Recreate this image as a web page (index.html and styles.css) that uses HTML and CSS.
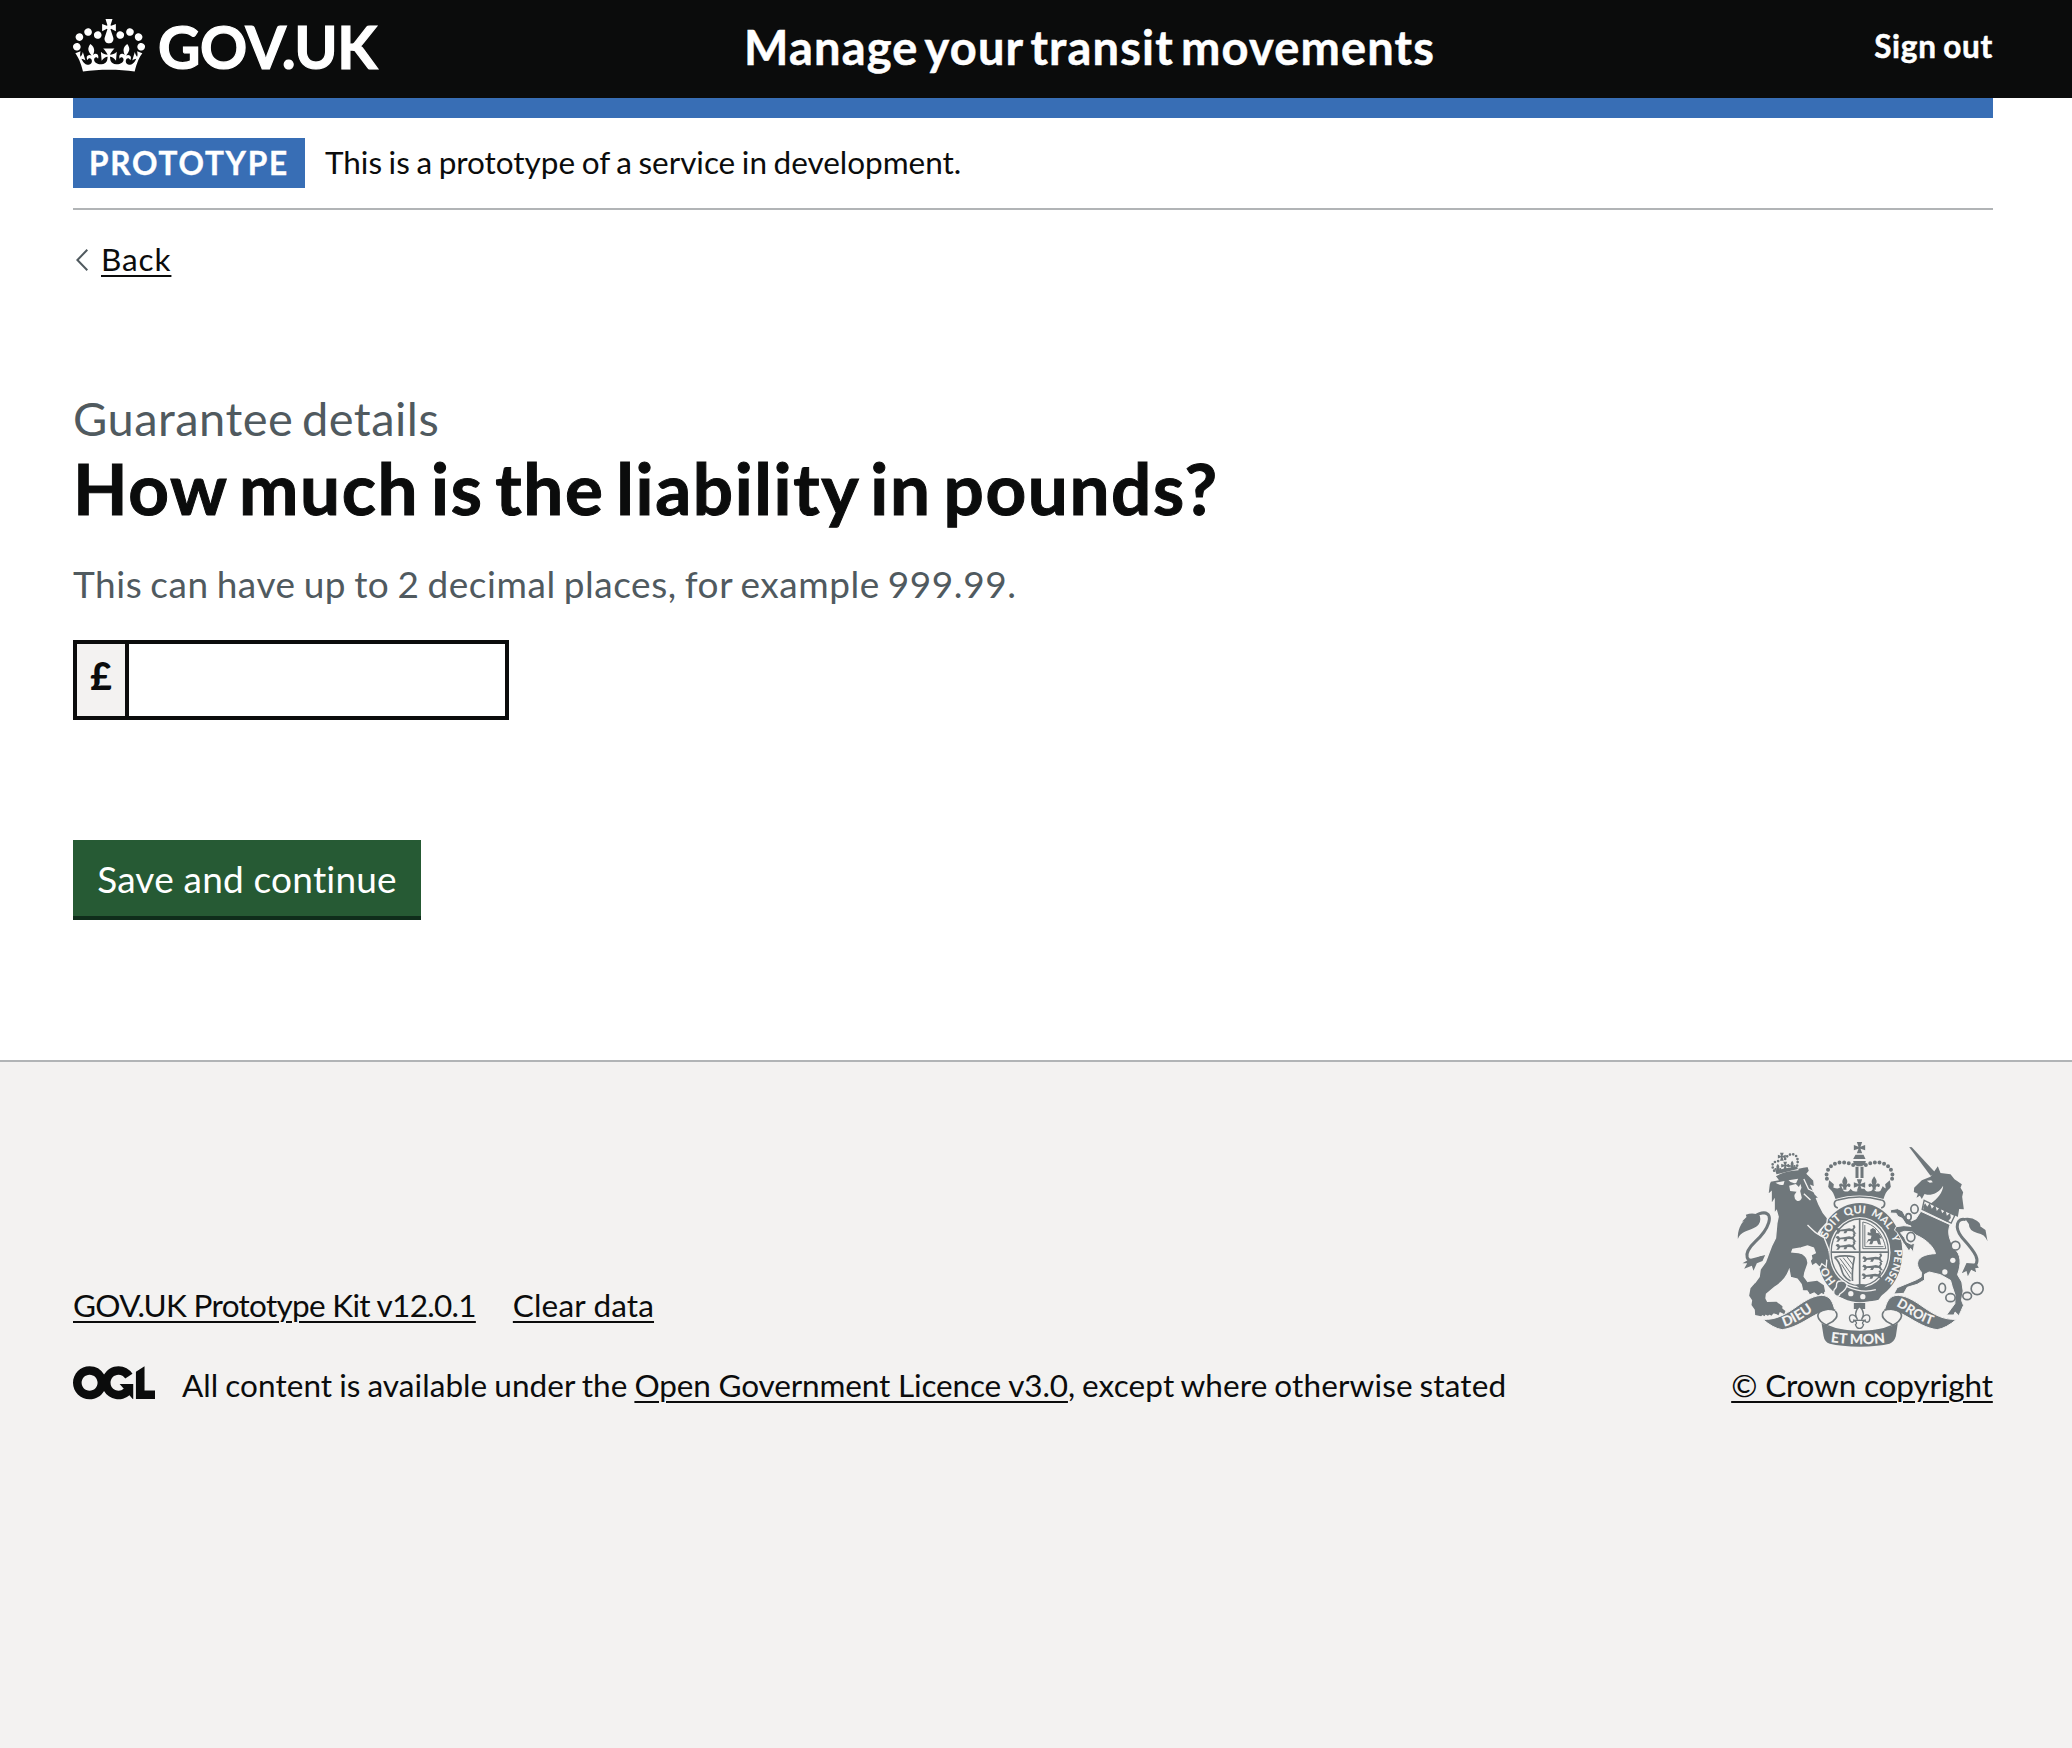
FILE: index.html
```html
<!DOCTYPE html>
<html lang="en">
<head>
<meta charset="utf-8">
<title>How much is the liability in pounds? - Manage your transit movements</title>
<link rel="stylesheet" href="styles.css">
</head>
<body>
<header class="header">
  <div class="container header-inner">
    <a class="logo" href="#">
      <svg class="logo-crown" viewBox="0 0 132 97" aria-hidden="true"><path fill="currentColor" fill-rule="evenodd" d="M25 30.2c3.5 1.5 7.7-.2 9.1-3.7 1.5-3.6-.2-7.8-3.9-9.2-3.6-1.4-7.6.3-9.1 3.9-1.4 3.5.3 7.5 3.9 9zM9 39.5c3.6 1.5 7.8-.2 9.2-3.7 1.5-3.6-.2-7.8-3.9-9.1-3.6-1.5-7.6.2-9.1 3.8-1.4 3.5.3 7.5 3.8 9zM4.4 57.2c3.5 1.5 7.7-.2 9.1-3.8 1.5-3.6-.2-7.7-3.9-9.1-3.5-1.5-7.6.3-9.1 3.8-1.4 3.5.3 7.6 3.9 9.1zm38.3-21.4c3.5 1.5 7.7-.2 9.1-3.8 1.5-3.6-.2-7.7-3.9-9.1-3.6-1.5-7.6.3-9.1 3.8-1.3 3.6.4 7.7 3.9 9.1zm64.4-5.6c-3.6 1.5-7.8-.2-9.1-3.7-1.5-3.6.2-7.8 3.8-9.2 3.6-1.4 7.7.3 9.2 3.9 1.3 3.5-.4 7.5-3.9 9zm15.9 9.3c-3.6 1.5-7.7-.2-9.1-3.7-1.5-3.6.2-7.8 3.7-9.1 3.6-1.5 7.7.2 9.2 3.8 1.5 3.5-.3 7.5-3.8 9zm4.7 17.7c-3.6 1.5-7.8-.2-9.2-3.8-1.5-3.6.2-7.7 3.9-9.1 3.6-1.5 7.7.3 9.2 3.8 1.3 3.5-.4 7.6-3.9 9.1zM89.3 35.8c-3.6 1.5-7.8-.2-9.2-3.8-1.4-3.6.2-7.7 3.9-9.1 3.6-1.5 7.7.3 9.2 3.8 1.4 3.6-.3 7.7-3.9 9.1zM69.7 17.7l8.9 4.7V9.3l-8.9 2.8c-.2-.3-.5-.6-.9-.9L72.4 0H59.6l3.5 11.2c-.3.3-.6.5-.9.9l-8.8-2.8v13.1l8.8-4.7c.3.3.6.7.9.9l-5 15.4v.1c-.2.8-.4 1.6-.4 2.4 0 4.1 3.1 7.5 7 8.1h.2c.3 0 .7.1 1 .1.4 0 .7 0 1-.1h.2c4-.6 7.1-4.1 7.1-8.1 0-.8-.1-1.7-.4-2.4V34l-5.1-15.4c.4-.2.7-.6 1-.9zM66 92.8c16.9 0 32.8 1.1 47.1 3.2 4-16.9 8.9-26.7 14-33.5l-9.6-3.4c1 4.9 1.1 7.2 0 10.2-1.5-1.4-3-4.3-4.2-8.7L108.6 76c2.8-2 5-3.2 7.5-3.3-4.4 9.4-10 11.9-13.6 11.2-4.3-.8-6.3-4.6-5.6-7.9 1-4.7 5.7-5.9 8-.5 4.3-8.7-3-11.4-7.6-8.8 7.1-7.2 7.9-13.5 2.1-21.1-8 6.1-8.1 12.3-4.5 20.8-4.7-5.4-12.1-2.5-9.5 6.2 3.4-5.2 7.9-2 7.2 3.1-.6 4.3-6.4 7.8-13.5 7.2-10.3-.9-10.9-8-11.2-13.8 2.5-.5 7.1 1.8 11 7.3L80.2 60c-4.1 4.4-8 5.3-12.3 5.4 1.4-4.4 8-11.6 8-11.6H55.5s6.4 7.2 7.9 11.6c-4.2-.1-8-1-12.3-5.4l1.4 16.4c3.9-5.5 8.5-7.7 10.9-7.3-.3 5.8-.9 12.8-11.1 13.8-7.2.6-12.9-2.9-13.5-7.2-.7-5 3.8-8.3 7.1-3.1 2.7-8.7-4.6-11.6-9.4-6.2 3.7-8.5 3.6-14.7-4.6-20.8-5.8 7.6-5 13.9 2.2 21.1-4.7-2.6-11.9.1-7.7 8.8 2.3-5.5 7.1-4.2 8.1.5.7 3.3-1.3 7.1-5.7 7.9-3.5.7-9-1.8-13.5-11.2 2.5.1 4.7 1.3 7.5 3.3l-4.7-15.4c-1.2 4.4-2.7 7.2-4.3 8.7-1.1-3-.9-5.3 0-10.2l-9.5 3.4c5 6.9 9.9 16.7 14 33.5 14.8-2.1 30.8-3.2 47.7-3.2z"/></svg>
      <span class="logo-text">GOV.UK</span>
    </a>
    <a class="service-name" href="#">Manage your transit movements</a>
    <a class="sign-out" href="#">Sign out</a>
  </div>
</header>
<div class="container">
  <div class="header-bar"></div>
  <div class="phase-banner">
    <strong class="tag">PROTOTYPE</strong>
    <span class="phase-text">This is a prototype of a service in development.</span>
  </div>
  <a class="back" href="#">
    <svg class="back-arrow" viewBox="0 0 12 22" aria-hidden="true"><path d="M11.3.8 1.4 11l9.9 10.2" fill="none" stroke="#505a5f" stroke-width="2"/></svg>
    <span class="back-text">Back</span>
  </a>
  <main class="main">
    <span class="caption">Guarantee details</span>
    <h1 class="heading"><label for="liability">How much is the liability in pounds?</label></h1>
    <p class="hint">This can have up to 2 decimal places, for example 999.99.</p>
    <div class="input-group">
      <span class="prefix">£</span>
      <input class="input" id="liability" type="text">
    </div>
    <button class="button" type="button">Save and continue</button>
  </main>
</div>
<footer class="footer">
  <div class="container footer-inner">
    <div class="footer-meta">
      <div class="footer-links">
        <a class="kit" href="#">GOV.UK Prototype Kit v12.0.1</a>
        <a class="clear" href="#">Clear data</a>
      </div>
      <div class="licence">
        <svg class="ogl" viewBox="0 0 483.2 195.7" aria-hidden="true">
          <g fill="#0b0c0c"><path d="M421.5 142.8V.1l-50.7 32.3v161.1h112.4v-50.7zm-122.3-9.6A47.12 47.12 0 0 1 221 97.8c0-26 21.1-47.1 47.1-47.1 16.7 0 31.4 8.7 39.7 21.8l42.7-27.2A97.63 97.63 0 0 0 268.1 0c-36.5 0-68.3 20.1-85.1 49.7A98 98 0 0 0 97.8 0C43.9 0 0 43.9 0 97.8s43.9 97.8 97.8 97.8c36.5 0 68.3-20.1 85.1-49.7a97.76 97.76 0 0 0 149.6 25.4l19.4 22.2h3v-87.8h-80l24.3 27.5zM97.8 145c-26 0-47.1-21.1-47.1-47.1s21.1-47.1 47.1-47.1 47.1 21.1 47.1 47.1S123.8 145 97.8 145"/></g>
        </svg>
        <p class="licence-text"><span class="lic-a">All content is available under the </span><a class="lic-link" href="#">Open Government Licence v3.0</a><span class="lic-b">, except where otherwise stated</span></p>
      </div>
    </div>
    <div class="copyright">
      <svg class="crest" viewBox="50 35 752 615" aria-hidden="true">
        <defs>
          <path id="garter" d="M418 485A104 118 0 0 1 418 249A104 118 0 0 1 418 485"/>
          <path id="dieu" d="M191 589C229 580 259 552 300 528"/>
          <path id="mon" d="M330 635Q418 648 510 635"/>
          <path id="droit" d="M526 527C563 545 598 580 662 590"/>
          <g id="lis"><path d="M0-20C-9-8-9-2-4 6-9-1-18 0-17 8-16 13-10 13-9 9-4 12-4 15-5 20H5C4 15 4 12 9 9 10 13 16 13 17 8 18 0 9-1 4 6 9-2 9-8 0-20Z"/></g>
          <g id="pattee"><path d="M-8-17H8L3-3 17-8V8L3 3 8 17H-8L-3 3-17 8V-8L-3-3Z"/></g>
          <g id="passant"><path d="M-31-2-27-8-21-7-18-3-2-5 10-7 19-5 23-10 20-15 26-17 29-10 24-3 28 5 32 9H25L19 2 5 1 1 8H-7L-4 2-16 2-22 9H-29L-24 3-27-1Z"/></g>
        </defs>
        <g fill="#6f777b" stroke="none">
          <!-- royal crown -->
          <use href="#pattee" x="417" y="52"/>
          <path d="M405 73h24l6 13h-37zM398 92h38c-1 10-8 16-19 16s-18-6-19-16z"/>
          <path d="M405 109h9v34h-9zM420 109h9v34h-9z"/>
          <path d="M325 172c12 10 16 21 20 34 45-14 98-14 144 0 4-13 8-24 20-34-10 4-18 3-22-5l-7 14c-8 5-17 3-21-6l-7 7c-8 3-16 2-20-7l-15 0c-4 9-12 10-20 7l-7-7c-4 9-13 11-21 6l-7-14c-4 8-12 9-22 5z"/>
          <use href="#lis" x="373" y="158"/><use href="#lis" x="461" y="158"/>
          <use href="#pattee" x="417" y="164"/>
          <path d="M326 150l14 12-3 22-14-14zM508 150l-14 12 3 22 14-14z"/>
          <g fill="none" stroke="#6f777b" stroke-width="12" stroke-linecap="round">
            <path stroke-dasharray="0 14" d="M398 104C370 90 335 95 323 118Q312 138 325 158"/>
            <path stroke-dasharray="0 14" d="M436 104C464 90 499 95 511 118Q522 138 509 158"/>
          </g>
          <path fill="none" stroke="#6f777b" stroke-width="5" d="M352 233C338 228 338 211 352 209 395 197 439 197 482 209 496 211 496 228 482 233"/>

          <!-- garter and shield -->
          <ellipse cx="418" cy="367" rx="128" ry="149"/>
          <ellipse cx="418" cy="366" rx="92" ry="106" fill="#f3f2f1"/>
          <ellipse cx="418" cy="366" rx="86" ry="100" fill="none" stroke="#6f777b" stroke-width="4"/>
          <path d="M415 264h5v202h-5zM332 363h172v5H332z"/>
          <use href="#passant" x="376" y="301"/><use href="#passant" x="376" y="325"/><use href="#passant" x="376" y="349"/>
          <use href="#passant" x="456" y="386"/><use href="#passant" x="456" y="411"/><use href="#passant" x="454" y="437"/>
          <path fill="none" stroke="#6f777b" stroke-width="3" d="M427 275V355H496M433 284V349H489M427 275C460 280 488 310 496 355"/>
          <path d="M437 340l6-13 8-2 2-9-12-2 1-9 8 3-1-10 8-5 9 5 1 10 8 1 10 16-8-2 5 20-9-1-4-11-10 1-4 10h-9l4-11-7 2z"/>
          <path fill="none" stroke="#6f777b" stroke-width="5" d="M342 381C372 405 352 433 390 452M342 381Q370 373 402 380M402 380Q394 415 396 452"/>
          <path fill="none" stroke="#6f777b" stroke-width="3" d="M358 384L393 432M368 382L396 418M363 402L390 444M380 380L398 404"/>
          <path d="M352 452C375 478 440 478 490 486L474 508C430 520 380 508 342 494Z"/>
          <path d="M405 464Q418 458 440 464L428 474Q416 476 405 464Z"/>
          <path fill="#6f777b" stroke="#f3f2f1" stroke-width="4" d="M360 452Q348 452 348 464 349 472 341 478 336 492 348 497 356 500 358 491 378 478 380 462 372 450 360 452Z"/>
          <path fill="none" stroke="#f3f2f1" stroke-width="4" d="M378 468Q425 490 466 478"/>
          <circle cx="391" cy="490" r="8" fill="#f3f2f1"/><circle cx="427" cy="499" r="8" fill="#f3f2f1"/>
          <g class="motto" fill="#f3f2f1">
            <text font-size="33"><textPath href="#garter" startOffset="80">HO</textPath></text>
            <text font-size="33"><textPath href="#garter" startOffset="216">SOIT</textPath></text>
            <text font-size="33"><textPath href="#garter" startOffset="304">QUI</textPath></text>
            <text font-size="32"><textPath href="#garter" startOffset="382">MAL</textPath></text>
            <text font-size="30"><textPath href="#garter" startOffset="472">Y</textPath></text>
            <text font-size="32"><textPath href="#garter" startOffset="514">PENSE</textPath></text>
          </g>

          <!-- lion -->
          <path stroke="#f3f2f1" stroke-width="4" d="M150 152l22-4-10-13 14-10 72-15 15-2 4 14-7 8 20 20 2 20-10-4 12 25 11 11-7 2 7 18 13 25 13 16-2 15-19 20-8 12 19 12 14 36-6 30-2 22-13-10-6 12-12-12-12 7-5-16 10-12 9-2-9-24-18-6-19 6-25 4-3 8 20 2c16 2 31 16 28 34l-9 26-2 12 18 24 32 4 12 14 0 14-10-5-10 8-12-10-14 6-6-12-14 0-5-20-12-16-20-5-4-21c-8 22-25 39-43 50l-25 21-3 24 14 10 30 2 18 14-4 13-14-6-4 10-14-8-8 9-14-9-6 10-20-10-3-13-7-9 4-11-12-10 5-17-5-22 21-29 3-22 16-22 19-50 11-22 4-44 4-20-5-18-7 10 0-42-9 14 0-38-10 9 4-33z"/>
          <path d="M305 385l-8 14-9-9-10 5-4-20 20-10 30-4 2 30-9-4zM262 455l28-4 20 14 4 20-12-4-6 8-14-6-14 6-8-10-14-2zM140 515l28-1 18 14-2 16-12-2-4 9-14-3-12 8-12-6-8 8-18-4-1-16-10-14 2-14-9-14 4-22 14-16 16 20z"/>
          <path fill="none" stroke="#6f777b" stroke-width="9" d="M124 381C73 408 64 371 105 333 145 297 162 249 130 247Q117 247 105 257"/>
          <path d="M52 326C51 299 61 281 70 272L64 274 78 260 76 253Q99 244 118 256 124 277 107 289C84 304 61 300 52 326ZM86 387l-20 12 14 0-9 16 23-9 5 15 10-22 17-7 8-18z"/>
          <path fill="#f3f2f1" d="M165 157l27-5-3 11q-12 3-24-6zM204 150l29-5-6 13q-14 3-23-8zM206 166l20-5 9 9 5-9 3 11-4 10 5 20q-5 13-15 9-9-5-7-18l6-9-19-2z"/>
          <path fill="none" stroke="#f3f2f1" stroke-width="4" d="M261 284C282 305 296 318 319 324M250 146l14 30 18 9M250 190l20 19"/>
          <path fill="none" stroke="#f3f2f1" stroke-width="5" d="M162 137Q195 118 234 117"/>
          <path d="M164 120l66-12 2 8-64 16z"/>
          <use href="#pattee" transform="translate(184 79) scale(.7)"/>
          <use href="#lis" transform="translate(172 112) scale(.6)"/><use href="#lis" transform="translate(215 103) scale(.6)"/>
          <use href="#pattee" transform="translate(194 106) scale(.7)"/>
          <path fill="none" stroke="#6f777b" stroke-width="8" stroke-linecap="round" stroke-dasharray="0 10" d="M161 121Q146 96 174 92M194 86Q206 66 224 74 236 84 229 110"/>

          <!-- unicorn -->
          <path d="M566 50l8 1 71 76-15 9z"/>
          <path d="M630 139L652 108 660 128 690 132 702 147 724 162 720 172 728 186 725 199 730 237 716 236 712 260 694 250 665 238 630 220C652 205 667 185 668 166 655 188 634 195 620 193L612 191 604 206 598 196 588 202 592 190 580 185 581 172 604 150Z"/>
          <path fill="#f3f2f1" d="M619 151l13-1 5 6-9 1z"/>
          <path fill="none" stroke="#6f777b" stroke-width="4" d="M611 210l92 45-11 23-87-41z"/>
          <path d="M608 228l6-9 6 10 8-11 6 17 10-12 5 19 10-13 6 20 10-11 4 18 10-8 2 15-10 12-72-37z"/>
          <path stroke="#f3f2f1" stroke-width="3" d="M601 243L689 283C678 310 690 330 699 353 724 371 722 403 711 433L724 455 728 482 723 510 729 525 722 541 715 556 704 545 700 554 678 554 692 535 703 520 704 495 695 468 690 450 660 433 626 425 612 432 612 449 590 462 560 471 550 489 520 491 530 472 552 463 588 448 602 440 603 426C577 395 595 372 645 370 640 350 618 328 588 315L574 304 552 303 540 307 552 322 558 335 572 342 582 338 578 365 570 354 566 363 556 348 548 337 530 307 522 299 527 289 550 286 572 288 556 281 545 264 532 258 527 249 509 248 511 238 531 235 546 242 557 262 572 272 586 266Z"/>
          <path fill="none" stroke="#6f777b" stroke-width="9" d="M736 268C710 260 700 290 724 321 754 354 798 401 744 414"/>
          <path d="M732 263q22-3 37 8 13 8 10 17l16 11 6 34q-8-22-31-25-25-7-25-27zM738 398l-14 31 14-7 4 16 10-20 15 8-3-12 11-2-7-12z"/>
          <g fill="none" stroke="#6f777b" stroke-width="5">
            <ellipse cx="582" cy="236" rx="11" ry="13"/><ellipse cx="564" cy="260" rx="8" ry="10"/><ellipse cx="571" cy="320" rx="12" ry="14"/>
            <circle cx="705" cy="346" r="13" fill="#f3f2f1"/><ellipse cx="665" cy="473" rx="10" ry="14"/><ellipse cx="690" cy="502" rx="14" ry="12" fill="#f3f2f1"/>
            <ellipse cx="740" cy="497" rx="13" ry="11"/><circle cx="770" cy="475" r="18"/>
          </g>
          <circle cx="697" cy="390" r="8" fill="#f3f2f1"/><circle cx="673" cy="425" r="8" fill="#f3f2f1"/>

          <!-- motto scroll -->
          <g stroke="#f3f2f1" stroke-width="3">
            <path d="M127 567C205 571 240 500 302 495 330 495 337 515 344 543 300 525 250 590 185 598Q158 594 127 567Z"/>
            <path d="M708 567C630 571 595 500 533 495 505 495 498 515 491 543 535 525 585 590 650 598Q677 594 708 567Z"/>
          </g>
          <g fill="none" stroke="#6f777b" stroke-width="5">
            <path d="M344 540C320 532 292 540 292 557 294 575 330 603 418 604 505 603 541 575 543 557 543 540 515 532 491 540M344 542C358 556 342 573 324 580 315 585 312 590 314 594M491 542C477 556 493 573 511 580 520 585 523 590 521 594"/>
          </g>
          <path d="M303 578C340 610 496 610 532 578L526 618Q521 635 507 640 475 648 418 649 360 648 328 640 312 635 309 616Z"/>
          <g class="motto" fill="#f3f2f1">
            <text font-size="42"><textPath href="#dieu">DIEU</textPath></text>
            <text font-size="42"><textPath href="#mon">ET MON</textPath></text>
            <text font-size="39"><textPath href="#droit">DROIT</textPath></text>
          </g>
          <path d="M400 518h34v18H400z"/>
          <g fill="#f3f2f1" stroke="#6f777b" stroke-width="4"><path d="M417 528C400 545 405 557 411 568 402 548 385 551 387 565 389 580 401 577 400 570 408 574 411 579 405 583 410 598 424 598 429 583 423 579 426 574 434 570 433 577 447 580 448 565 449 551 432 548 423 568 429 557 434 545 417 528Z"/><path d="M400 570H434"/></g>
        </g>
      </svg>
      <a class="crown-link" href="#">© Crown copyright</a>
    </div>
  </div>
</footer>
</body>
</html>
```
FILE: styles.css
```css
* { box-sizing: border-box; }
body {
  margin: 0;
  min-height: 100vh;
  display: flex;
  flex-direction: column;
  background: #fff;
  color: #0b0c0c;
  font-family: Lato, "Liberation Sans", sans-serif;
  font-size: 31.5px;
  line-height: 40px;
}
a { color: inherit; text-decoration: none; }
p, h1 { margin: 0; }

.container { width: 1920px; margin: 0 79px 0 73px; }

.header { background: #0b0c0c; color: #fff; height: 98px; }
.header-inner { display: grid; grid-template-columns: 671px 1fr auto; align-items: start; font-weight: 700; -webkit-text-stroke: .5px currentColor; }
.logo { display: flex; gap: 13px; padding-top: 19px; }
.logo-crown { width: 72px; height: 53px; }
.logo-text { font-size: 58.5px; line-height: 54px; letter-spacing: -.4px; -webkit-text-stroke: 1.2px currentColor; }
.service-name { padding-top: 22px; font-size: 47px; line-height: 50px; letter-spacing: 1.18px; word-spacing: -5.5px; }
.sign-out { padding-top: 26px; letter-spacing: .75px; word-spacing: -2px; }

.header-bar { height: 20px; background: #386eb5; }

.phase-banner { display: flex; gap: 20px; padding: 20px 0; border-bottom: 2px solid #b1b4b6; line-height: 50px; }
.tag { width: 232px; text-align: center; background: #386eb5; color: #fff; letter-spacing: 1.8px; -webkit-text-stroke: .4px currentColor; }
.phase-text { line-height: 49px; letter-spacing: -.03px; word-spacing: -1.4px; }

.back { display: flex; align-items: flex-start; margin-top: 29px; }
.back-arrow { width: 12px; height: 22px; margin: 10px 13px 0 3px; }
.back-text { letter-spacing: .9px; }
.back-text, .kit, .clear, .lic-link, .crown-link {
  text-decoration: underline;
  text-decoration-thickness: 2px;
  text-underline-offset: 4px;
}

.main { padding-top: 114px; }
.caption { display: block; color: #505a5f; font-size: 47px; line-height: 50px; letter-spacing: .5px; word-spacing: -4px; }
.heading { margin-top: 5px; font-size: 71px; line-height: 80px; font-weight: 700; letter-spacing: 1.6px; word-spacing: -7px; -webkit-text-stroke: 1px currentColor; }
.hint { margin-top: 31px; color: #505a5f; font-size: 37px; line-height: 50px; letter-spacing: .55px; word-spacing: -2px; }

.input-group { display: flex; width: 436px; height: 80px; margin-top: 31px; border: 4px solid #0b0c0c; }
.prefix { width: 52px; border-right: 4px solid #0b0c0c; background: #f3f2f1; text-align: center; font-size: 37px; font-weight: 900; line-height: 64px; }
.input { flex: 1; min-width: 0; border: 0; padding: 0 10px; background: #fff; font: inherit; outline: 0; }

.button {
  display: block;
  width: 348px;
  height: 76px;
  margin: 120px 0 144px;
  padding: 0;
  border: 0;
  background: #265a34;
  box-shadow: 0 4px 0 #0f2d1b;
  color: #fff;
  font: 37px/75px Lato, "Liberation Sans", sans-serif;
  letter-spacing: .2px;
}

.footer { flex: 1; border-top: 2px solid #b1b4b6; background: #f3f2f1; padding-top: 80px; }
.footer-inner { display: flex; justify-content: space-between; align-items: flex-end; }
.footer-links { display: flex; gap: 37px; margin-bottom: 40px; }
.kit { letter-spacing: -.7px; }
.clear { letter-spacing: .15px; }
.licence { display: flex; gap: 27px; }
.ogl { width: 82px; height: 33.5px; margin-top: 1px; }
.lic-a { letter-spacing: .07px; word-spacing: -1.2px; }
.lic-link { letter-spacing: -.14px; }
.lic-b { letter-spacing: .15px; word-spacing: -1.5px; }

.copyright { display: flex; flex-direction: column; align-items: center; width: 262px; white-space: nowrap; }
.crest { width: 251px; height: 205px; margin-bottom: 18px; }
.crown-link { letter-spacing: -.15px; }
.motto { font-family: Lato, "Liberation Sans", sans-serif; font-weight: 900; }
```
